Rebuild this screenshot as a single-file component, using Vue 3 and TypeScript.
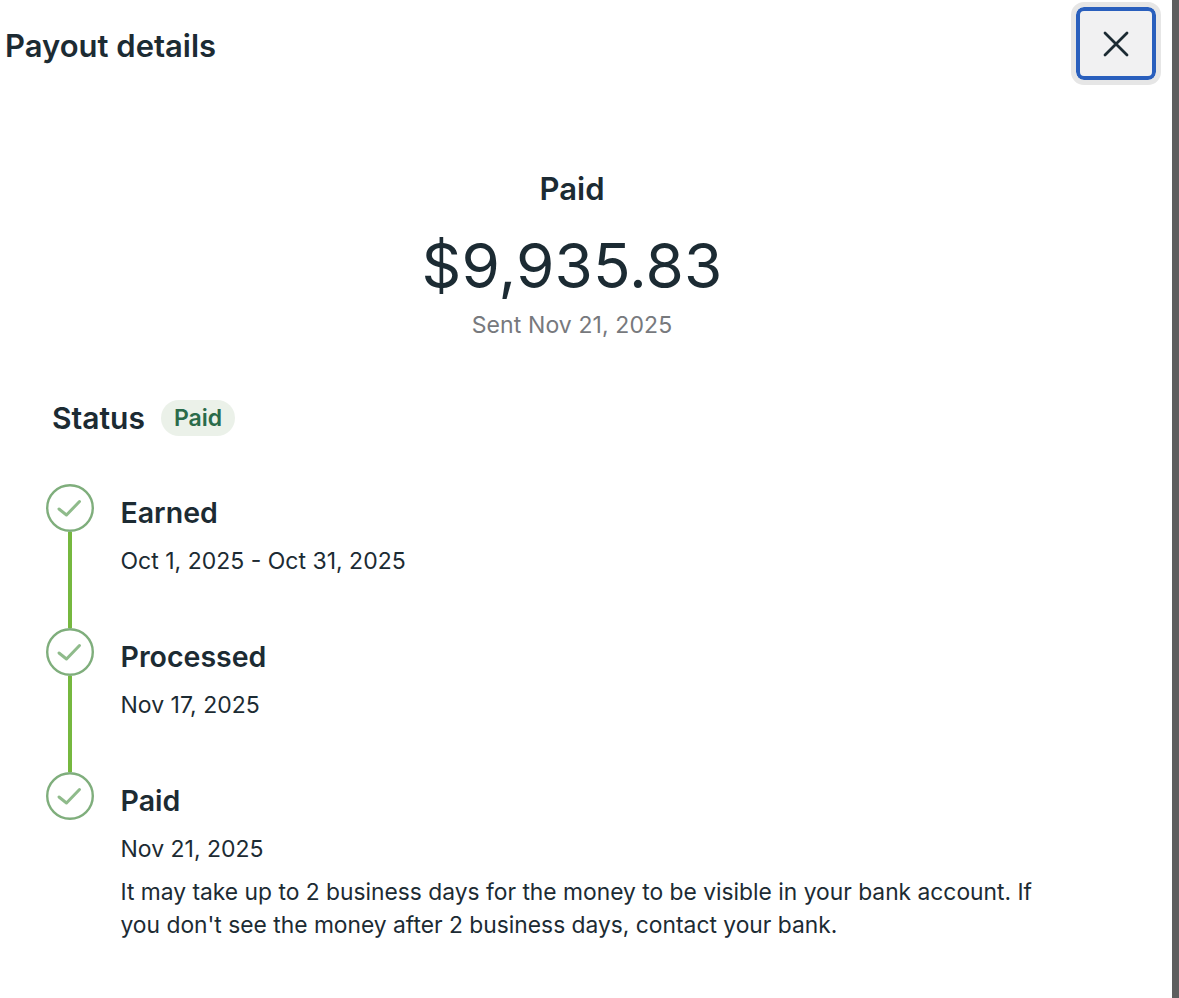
<script setup lang="ts">
interface Step {
  title: string;
  date: string;
  note?: string;
}

const steps: Step[] = [
  { title: "Earned", date: "Oct 1, 2025 - Oct 31, 2025" },
  { title: "Processed", date: "Nov 17, 2025" },
  {
    title: "Paid",
    date: "Nov 21, 2025",
    note: "It may take up to 2 business days for the money to be visible in your bank account. If you don't see the money after 2 business days, contact your bank.",
  },
];
</script>

<template>
  <div class="page">
    <main class="panel">
      <header class="head">
        <h1 class="head__title">Payout details</h1>
        <button class="close" type="button" aria-label="Close">
          <svg width="28" height="28" viewBox="0 0 28 28" fill="none">
            <path d="M3 3 L25 25 M25 3 L3 25" stroke="#1c2b33" stroke-width="2.8" stroke-linecap="round" />
          </svg>
        </button>
      </header>

      <section class="summary">
        <div class="summary__label">Paid</div>
        <div class="summary__amount">$9,935.83</div>
        <div class="summary__sent">Sent Nov 21, 2025</div>
      </section>

      <section class="status">
        <h2 class="status__title">Status</h2>
        <span class="badge">Paid</span>
      </section>

      <ol class="steps">
        <li v-for="step in steps" :key="step.title" class="step">
          <div class="step__rail">
            <svg class="step__icon" width="48" height="48" viewBox="0 0 48 48" fill="none">
              <circle cx="24" cy="24" r="22.8" stroke="#7fae7c" stroke-width="2.4" />
              <path d="M13 25 L20.5 31 L33.5 17.5" stroke="#8fbb8b" stroke-width="3" stroke-linecap="round" stroke-linejoin="round" />
            </svg>
          </div>
          <div class="step__body">
            <div class="step__title">{{ step.title }}</div>
            <div class="step__date">{{ step.date }}</div>
            <p v-if="step.note" class="step__note">{{ step.note }}</p>
          </div>
        </li>
      </ol>
    </main>
    <div class="scrollbar"></div>
  </div>
</template>

<style scoped>
.page {
  display: flex;
  width: 1179px;
  height: 998px;
  overflow: hidden;
  background: #fff;
  color: #1c2b33;
  font-family: Inter, "Noto Sans", sans-serif;
}

.panel {
  flex: 1;
  min-width: 0;
}

.scrollbar {
  width: 7px;
  background: #5e5e5e;
}

.head {
  display: flex;
  align-items: flex-start;
  justify-content: space-between;
  height: 86px;
  padding: 2px 11px 0 5px;
  box-sizing: content-box;
}

.head__title {
  margin: 27px 0 0;
  font-size: 31px;
  line-height: 34px;
  font-weight: 600;
}

.close {
  display: flex;
  align-items: center;
  justify-content: center;
  width: 80px;
  height: 73px;
  margin: 5px 5px 0 0;
  padding: 0;
  box-sizing: border-box;
  background: #f1f1f2;
  border: 4px solid #295fbd;
  border-radius: 8px;
  outline: 5px solid #e6e6e6;
}

.summary {
  display: flex;
  flex-direction: column;
  align-items: center;
  margin-top: 83px;
  padding-right: 28px;
}

.summary__label {
  font-size: 31px;
  line-height: 36px;
  font-weight: 600;
}

.summary__amount {
  margin-top: 21px;
  font-size: 62px;
  line-height: 76px;
  font-weight: 400;
  letter-spacing: 0.1px;
}

.summary__sent {
  margin-top: 7px;
  font-size: 23px;
  line-height: 28px;
  letter-spacing: 0.1px;
  color: #77797d;
}

.status {
  display: flex;
  align-items: center;
  gap: 16px;
  margin: 61px 0 0 52px;
  height: 36px;
}

.status__title {
  margin: -1px 0 0;
  font-size: 30px;
  line-height: 34px;
  font-weight: 600;
}

.badge {
  display: block;
  height: 36px;
  padding: 0 13px;
  border-radius: 18px;
  background: #ebf1e9;
  color: #2a6b4a;
  font-size: 23px;
  line-height: 36px;
  font-weight: 600;
}

.steps {
  list-style: none;
  margin: 48px 0 0;
  padding: 0 0 0 46px;
}

.step {
  display: flex;
  gap: 26.5px;
  min-height: 144px;
}

.step__rail {
  position: relative;
  flex: none;
  width: 48px;
}

.step:not(:last-child) .step__rail::after {
  content: "";
  position: absolute;
  left: 22px;
  top: 48px;
  bottom: 0;
  width: 4px;
  background: #76b83f;
}

.step__icon {
  display: block;
}

.step__title {
  margin-top: 12px;
  font-size: 28.5px;
  line-height: 34px;
  font-weight: 600;
}

.step__date {
  margin-top: 16px;
  font-size: 23px;
  line-height: 30px;
}

.step__note {
  margin: 12px 0 0;
  width: 930px;
  font-size: 22.8px;
  line-height: 32.5px;
}
</style>

<style>
html,
body {
  margin: 0;
  background: #fff;
}
</style>
